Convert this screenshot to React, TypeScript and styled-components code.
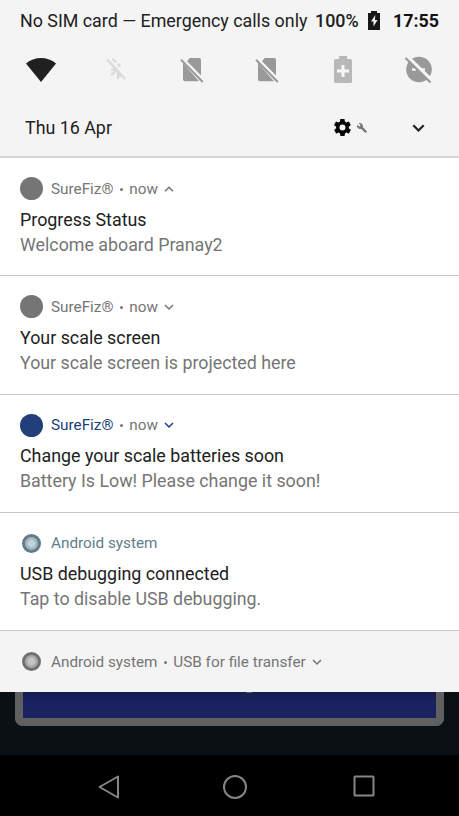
import React from "react";
import styled, { createGlobalStyle } from "styled-components";

const GlobalStyle = createGlobalStyle`
  * { box-sizing: border-box; }
  body { margin: 0; background: #000; font-family: Roboto, "Noto Sans", sans-serif; }
`;

const Screen = styled.main`
  width: 459px;
  height: 816px;
  overflow: hidden;
  display: flex;
  flex-direction: column;
  background: #0b1014;
`;

const Header = styled.header`
  height: 158px;
  flex: none;
  background: #f4f4f4;
  border-bottom: 2px solid #d6d6d6;
`;

const StatusBar = styled.div`
  height: 40px;
  padding: 0 20px;
  display: flex;
  align-items: center;
  white-space: nowrap;
  color: #212121;
`;

const Carrier = styled.span`
  width: 295px;
  font-size: 17.85px;
`;

const BatteryLevel = styled.span`
  width: 53px;
  font-size: 17.85px;
  font-weight: 500;
`;

const Clock = styled.time`
  margin-left: auto;
  font-size: 17.85px;
  font-weight: 700;
  color: #111;
`;

const QuickSettings = styled.div`
  height: 59px;
  padding: 0 3px;
  display: grid;
  grid-template-columns: repeat(6, 1fr);
  align-items: center;
  justify-items: center;
`;

const DateRow = styled.div`
  height: 57px;
  padding: 0 34px 0 25px;
  display: flex;
  align-items: center;
  color: #212121;
  font-size: 17.85px;
`;

const DateText = styled.span`
  flex: 1;
`;

const Settings = styled.div`
  width: 78px;
  display: flex;
  align-items: center;
  gap: 6px;
`;

const Icon = styled.svg`
  display: block;
  flex: none;
  overflow: visible;
`;

const Notification = styled.article`
  height: 118.33px;
  flex: none;
  padding: 15px 20px 0;
  background: #fff;
  border-bottom: 1px solid #c8c8c8;
`;

const CollapsedNotification = styled.article`
  height: 61px;
  flex: none;
  padding: 15px 20px 0;
  background: #f4f4f4;
`;

const NotificationHeader = styled.div<{ $color: string }>`
  height: 31px;
  display: flex;
  align-items: center;
  white-space: nowrap;
  font-size: 15.3px;
  color: ${(p) => p.$color};
`;

const AppDot = styled.span<{ $color: string }>`
  width: 23px;
  height: 23px;
  margin-right: 8px;
  border-radius: 50%;
  background: ${(p) => p.$color};
`;

const SystemDot = styled.span<{ $ring: string; $fill: string; $core: string }>`
  width: 19px;
  height: 19px;
  margin: 0 10px 0 2px;
  border-radius: 50%;
  border: 3.5px solid ${(p) => p.$ring};
  background: radial-gradient(circle, ${(p) => p.$core} 3px, ${(p) => p.$fill} 4.5px);
`;

const Bullet = styled.span`
  width: 3px;
  height: 3px;
  margin: 1px 6.4px 0;
  border-radius: 50%;
  background: #757575;
`;

const Detail = styled.span`
  color: #757575;
  margin-right: 6.5px;
`;

const Title = styled.h2`
  margin: 2.5px 0 0;
  font-size: 17.85px;
  line-height: 26px;
  font-weight: 400;
  color: #212121;
  white-space: nowrap;
`;

const Body = styled.p`
  margin: 0;
  font-size: 17.82px;
  line-height: 23px;
  color: #757575;
  white-space: nowrap;
`;

const AppBehind = styled.section`
  height: 63px;
  flex: none;
  padding: 0 15px;
`;

const CardButton = styled.div`
  height: 34px;
  display: flex;
  justify-content: center;
  border: 8px solid #606060;
  border-top: 0;
  border-radius: 0 0 8px 8px;
  background: linear-gradient(#161d50, #1a225f 9px);
`;

const LetterTail = styled.span`
  width: 6px;
  height: 1px;
  margin-left: 38px;
  border-radius: 0 0 4px 4px;
  background: #555b80;
`;

const NavBar = styled.nav`
  height: 61px;
  flex: none;
  padding: 2px 84.5px 0 97px;
  display: flex;
  align-items: center;
  background: #000;
`;

const NavSlot = styled.div<{ $width: number }>`
  width: ${(p) => p.$width}px;
  flex: none;
`;

function Chevron({ up = false, color, width = 10, stroke = 1.5 }: { up?: boolean; color: string; width?: number; stroke?: number }) {
  return (
    <Icon width={width} height={width * 0.6} viewBox="0 0 10 6">
      <path d={up ? "M1 5.2 5 1.2l4 4" : "M1 1l4 4 4-4"} fill="none" stroke={color} strokeWidth={stroke} />
    </Icon>
  );
}

function NoSim() {
  return (
    <Icon width="24" height="26" viewBox="0 0 24 26">
      <path d="M9.5 1H19q2 0 2 2v20L7 4.500zM3 6v16.500q0 1.800 2 1.800h14z" fill="#999" />
      <path d="M2.400 1.500 23.500 23" stroke="#f4f4f4" strokeWidth="2.800" />
      <path d="M1 2.700 22.800 25" stroke="#999" strokeWidth="2" />
    </Icon>
  );
}

function QuickIcons() {
  return (
    <QuickSettings>
      <Icon width="30" height="24" viewBox="0 0 30 24">
        <path d="M0 5.500Q6.500 0 15 0t15 5.500L15 24z" fill="#202020" />
      </Icon>
      <Icon width="20" height="23" viewBox="0 0 20 23" fill="none" stroke="#dadada">
        <path d="M1 1.500 19 21" strokeWidth="2.400" />
        <path d="M6.500.8l3.500 3.500M11.500 6l3 2.500M5 11l4 1.500M5 17l5-4M12 21v-5l3 3" strokeWidth="2.300" />
      </Icon>
      <NoSim />
      <NoSim />
      <Icon width="18" height="27" viewBox="0 0 18 27">
        <path d="M5 0h8v3h3.500Q18 3 18 4.500v21q0 1.500-1.500 1.500h-15Q0 27 0 25.500v-21Q0 3 1.500 3H5z" fill="#b8b8b8" />
        <path d="M9 9v12M3 15h12" stroke="#f8f8f8" strokeWidth="3" />
      </Icon>
      <Icon width="27" height="28" viewBox="0 0 27 28">
        <circle cx="14" cy="13.500" r="12.800" fill="#999" />
        <path d="M7 13.500h4m5 0h4" stroke="#f4f4f4" strokeWidth="2.400" />
        <path d="M2.500.5 28 25.500" stroke="#f4f4f4" strokeWidth="3.200" />
        <path d="M.5 2 25.500 26.500" stroke="#999" strokeWidth="2.200" />
      </Icon>
    </QuickSettings>
  );
}

interface Message {
  title: string;
  body: string;
  color: string;
  up?: boolean;
}

const messages: Message[] = [
  { title: "Progress Status", body: "Welcome aboard Pranay2", color: "#757575", up: true },
  { title: "Your scale screen", body: "Your scale screen is projected here", color: "#757575" },
  { title: "Change your scale batteries soon", body: "Battery Is Low! Please change it soon!", color: "#213f7a" },
];

export default function App() {
  return (
    <Screen>
      <GlobalStyle />
      <Header>
        <StatusBar>
          <Carrier>No SIM card — Emergency calls only</Carrier>
          <BatteryLevel>100%</BatteryLevel>
          <Icon width="12" height="19" viewBox="0 0 12 19">
            <path d="M3 0h6v2h3v17H0V2h3z" fill="#171717" />
            <path d="M7.300 4 3 10.500h2.500v5L9.500 9H7z" fill="#f4f4f4" />
          </Icon>
          <Clock>17:55</Clock>
        </StatusBar>
        <QuickIcons />
        <DateRow>
          <DateText>Thu 16 Apr</DateText>
          <Settings>
            <Icon width="17" height="17" viewBox="2 2 20 20">
              <path d="M19.4 13c0-.3.1-.6.1-1s0-.7-.1-1l2.1-1.7c.2-.1.2-.4.1-.6l-2-3.5c-.1-.2-.4-.3-.6-.2l-2.5 1c-.5-.4-1.1-.7-1.7-1l-.4-2.6c0-.2-.2-.4-.5-.4h-4c-.2 0-.5.2-.5.4L9 5.1c-.6.2-1.1.6-1.7 1l-2.5-1c-.2-.1-.5 0-.6.2l-2 3.5c-.1.2-.1.5.1.6L4.5 11c0 .3-.1.7-.1 1s0 .7.1 1l-2.1 1.7c-.2.1-.2.4-.1.6l2 3.5c.1.2.4.3.6.2l2.5-1c.5.4 1.1.7 1.7 1l.4 2.6c0 .2.2.4.5.4h4c.2 0 .5-.2.5-.4l.4-2.6c.6-.3 1.2-.6 1.7-1l2.5 1c.2.1.5 0 .6-.2l2-3.5c.1-.2.1-.5-.1-.6zM12 15.5A3.500 3.500 0 1 1 12 8.500a3.500 3.500 0 0 1 0 7z" fill="#050505" />
            </Icon>
            <Icon width="10" height="10" viewBox="1 1 22 22">
              <path d="m22.700 19-9.100-9.100c.9-2.300.4-5-1.500-6.900-2-2-5-2.400-7.400-1.300L9 6 6 9 1.600 4.700C.4 7.100.9 10.100 2.900 12.100c1.900 1.900 4.600 2.400 6.900 1.500l9.100 9.100c.4.400 1 .4 1.400 0l2.300-2.300c.5-.4.500-1.100.1-1.400z" fill="#777" />
            </Icon>
          </Settings>
          <Chevron color="#222" width={13} stroke={1.700} />
        </DateRow>
      </Header>
      {messages.map((m) => (
        <Notification key={m.title}>
          <NotificationHeader $color={m.color}>
            <AppDot $color={m.color} />
            <span>SureFiz®</span>
            <Bullet />
            <Detail>now</Detail>
            <Chevron up={m.up} color={m.color} />
          </NotificationHeader>
          <Title>{m.title}</Title>
          <Body>{m.body}</Body>
        </Notification>
      ))}
      <Notification>
        <NotificationHeader $color="#607d8b">
          <SystemDot $ring="#607d8b" $fill="#a5b7c1" $core="#c5d2d8" />
          <span>Android system</span>
        </NotificationHeader>
        <Title>USB debugging connected</Title>
        <Body>Tap to disable USB debugging.</Body>
      </Notification>
      <CollapsedNotification>
        <NotificationHeader $color="#757575">
          <SystemDot $ring="#707070" $fill="#aaa" $core="#c5c5c5" />
          <span>Android system</span>
          <Bullet />
          <Detail>USB for file transfer</Detail>
          <Chevron color="#757575" />
        </NotificationHeader>
      </CollapsedNotification>
      <AppBehind>
        <CardButton>
          <LetterTail />
        </CardButton>
      </AppBehind>
      <NavBar>
        <NavSlot $width={126}>
          <Icon width="23" height="24" viewBox="0 0 23 24" fill="none" stroke="#858585" strokeWidth="2">
            <path d="M2.500 12 21 1.500v21z" strokeLinejoin="round" />
          </Icon>
        </NavSlot>
        <NavSlot $width={129.5}>
          <Icon width="24" height="24" viewBox="0 0 24 24" fill="none" stroke="#858585" strokeWidth="2">
            <circle cx="12" cy="12" r="11" />
          </Icon>
        </NavSlot>
        <NavSlot $width={22}>
          <Icon width="22" height="22" viewBox="0 0 22 22" fill="none" stroke="#858585" strokeWidth="2">
            <rect x="1.500" y="0.500" width="19" height="19" rx="0.500" />
          </Icon>
        </NavSlot>
      </NavBar>
    </Screen>
  );
}
